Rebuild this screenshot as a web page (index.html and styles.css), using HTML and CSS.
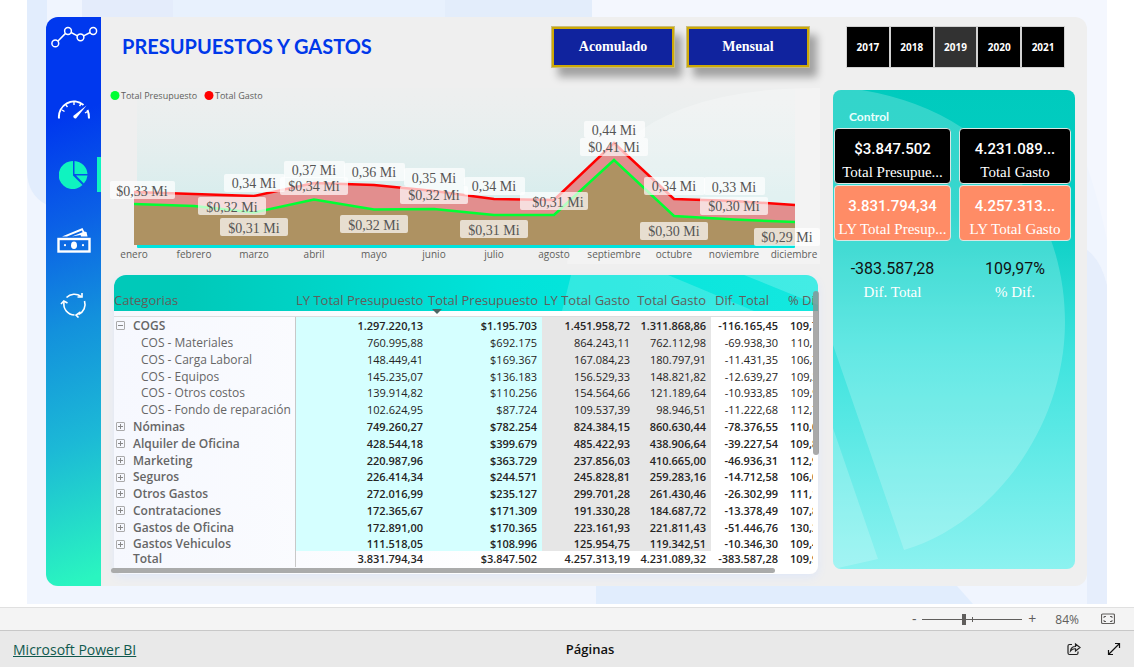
FILE: index.html
```html
<!DOCTYPE html>
<html lang="es">
<head>
<meta charset="utf-8">
<title>Presupuestos y Gastos</title>
<link rel="stylesheet" href="styles.css">
</head>
<body>
<div class="canvas">
  <svg class="canvas-art" viewBox="0 0 1080 604" preserveAspectRatio="none" aria-hidden="true">
    <path d="M55 0H146V17H55z" fill="#e4ecfb"/>
    <path d="M146 0H418V17H146z" fill="#e8f1fd"/>
    <path d="M418 0H565V17H418z" fill="#e3edfb"/>
    <path d="M565 0H1080V240Q1050 90 960 17H565z" fill="#f4f7fe"/>
    <path d="M0 0V170Q0 195 20 205V0z" fill="#e2edfd"/>
    <path d="M569 586H930L946 604H569z" fill="#e1edfd"/>
    <path d="M1060 250Q1074 260 1080 285V604H1060z" fill="#e6eefc"/>
  </svg>
  <div class="dashboard">
    <nav class="sidebar" aria-label="Secciones">
      <svg class="logo" viewBox="0 0 55 41" fill="none" stroke="#fff" stroke-width="1.5">
        <circle cx="9.300" cy="26.400" r="3.400"/><circle cx="22" cy="14" r="3.400"/><circle cx="34.500" cy="20.300" r="3.400"/><circle cx="47.200" cy="14" r="3.400"/>
        <path d="M12 24L19.500 16.400M25 15.500L31.500 18.800M37.600 18.800L44.200 15.500"/>
      </svg>
      <button class="nav-item" aria-label="Indicadores">
        <svg width="34" height="20" viewBox="0 0 34 20" fill="none" stroke="#fff">
          <path d="M2 18.500A15 15.500 0 0 1 26.500 5M30.500 10Q32 13.500 32 18.500" stroke-width="2"/>
          <path d="M5 10L7.500 11.500M9 5L10.500 7M17 2V5M24 4L22.500 6M30.500 11.500L28 13" stroke-width="1.400"/>
          <path d="M16.200 16L29.500 5.500L19 18.500Q16.500 19 16.200 16z" fill="#fff" stroke="none"/>
        </svg>
      </button>
      <button class="nav-item nav-active" aria-label="Presupuestos" aria-current="page">
        <svg width="30" height="30" viewBox="0 0 30 30" fill="#0ff3c0">
          <path d="M14 1A14 14 0 1 0 23.500 25L14 15.500z"/>
          <path d="M15.500 1A14 14 0 0 1 28.500 14H15.500z"/>
          <path d="M17 15.500H28.500A14 14 0 0 1 24.800 23.500z"/>
        </svg>
      </button>
      <button class="nav-item" aria-label="Pagos">
        <svg width="34" height="26" viewBox="0 0 34 26">
          <path d="M5 9.500L25.500 1L27.200 4.500L29.500 5L30.500 9.500H24L23.500 8L15 9.500L25.500 5.200L25 3.500L10 9.500z" fill="#fff"/>
          <rect x="1.500" y="12" width="31" height="12.500" fill="none" stroke="#fff" stroke-width="2.400"/>
          <ellipse cx="17" cy="18.200" rx="3" ry="3.800" fill="#fff"/>
          <circle cx="8" cy="18.200" r="1.100" fill="#fff"/><circle cx="26" cy="18.200" r="1.100" fill="#fff"/>
        </svg>
      </button>
      <button class="nav-item" aria-label="Actualizar">
        <svg width="28" height="26" viewBox="0 0 28 26" fill="none" stroke="#fff" stroke-width="1.600">
          <path d="M6.500 5.500A11 11 0 0 1 21 4.500M24.500 9A11 11 0 0 1 18.500 22.500M14.500 23A11 11 0 0 1 4 10"/>
          <path d="M17.500 5H22V1M20.500 20L16 23L18.500 25.500M1 12L3.800 9L7.500 11"/>
        </svg>
      </button>
    </nav>
    <main class="main">
      <header class="title-row">
        <h1 class="title">PRESUPUESTOS Y GASTOS</h1>
        <div class="views">
          <button class="view-btn">Acomulado</button>
          <button class="view-btn">Mensual</button>
        </div>
      </header>
      <div class="years">
        <button class="year">2017</button><button class="year">2018</button><button class="year year-on">2019</button><button class="year">2020</button><button class="year">2021</button>
      </div>
      <div class="left">
        <svg class="chart" viewBox="110 88 710 176" role="img" aria-label="Total Presupuesto y Total Gasto por mes">
          <defs>
            <linearGradient id="plot" x1="0" y1="0" x2="0" y2="1"><stop offset="0" stop-color="#e2efef" stop-opacity=".1"/><stop offset="1" stop-color="#c6ebeb"/></linearGradient>
          </defs>
          <rect x="137" y="88" width="658" height="157" fill="url(#plot)"/>
          <path d="M567 264Q585 88 815 88H820V264z" fill="#fff" opacity=".25"/>
          <rect x="137" y="244" width="658" height="4" rx="1" fill="#00e3de"/>
          <path d="M134 192L194 194L254 196L314 183L374 185L434 191L494 199L554 200L614 143L674 199L734 201L795 205V222L734 219.500L674 216L614 160L554 215L494 215L434 209L374 209.500L314 199.500L254 212.500L194 206L134 204z" fill="#e28e8e"/>
          <path d="M134 204L194 206L254 212.500L314 199.500L374 209.500L434 209L494 215L554 215L614 160L674 216L734 219.500L795 222V245H134z" fill="#ae9262"/>
          <path d="M134 192L194 194L254 196L314 183L374 185L434 191L494 199L554 200L614 143L674 199L734 201L795 205" fill="none" stroke="#f00" stroke-width="2.500"/>
          <path d="M134 204L194 206L254 212.500L314 199.500L374 209.500L434 209L494 215L554 215L614 160L674 216L734 219.500L795 222" fill="none" stroke="#0f3" stroke-width="2.500"/>
          <g class="plates">
            <rect x="110" y="181" width="65" height="18" rx="2"/><rect x="198" y="197" width="68" height="18" rx="2"/><rect x="220" y="218" width="68" height="18" rx="2"/><rect x="224" y="174" width="61" height="18" rx="2"/>
            <rect x="284" y="161" width="61" height="17" rx="2"/><rect x="280" y="177" width="68" height="18" rx="2"/><rect x="344" y="163" width="61" height="18" rx="2"/><rect x="340" y="215" width="68" height="18" rx="2"/>
            <rect x="404" y="168" width="61" height="18" rx="2"/><rect x="400" y="186" width="68" height="18" rx="2"/><rect x="464" y="177" width="61" height="18" rx="2"/><rect x="460" y="220" width="68" height="18" rx="2"/>
            <rect x="520" y="192" width="68" height="18" rx="2"/><rect x="584" y="121" width="61" height="17" rx="2"/><rect x="580" y="138" width="68" height="18" rx="2"/><rect x="644" y="177" width="61" height="18" rx="2"/>
            <rect x="640" y="222" width="68" height="18" rx="2"/><rect x="704" y="177" width="61" height="18" rx="2"/><rect x="700" y="197" width="68" height="18" rx="2"/><rect x="754" y="228" width="66" height="18" rx="2"/>
          </g>
          <g class="labels">
            <text x="142" y="196">$0,33 Mi</text><text x="232" y="212">$0,32 Mi</text><text x="254" y="233">$0,31 Mi</text><text x="254" y="188">0,34 Mi</text>
            <text x="314" y="175">0,37 Mi</text><text x="314" y="191">$0,34 Mi</text><text x="374" y="177">0,36 Mi</text><text x="374" y="230">$0,32 Mi</text>
            <text x="434" y="183">0,35 Mi</text><text x="434" y="200">$0,32 Mi</text><text x="494" y="191">0,34 Mi</text><text x="494" y="235">$0,31 Mi</text>
            <text x="558" y="207">$0,31 Mi</text><text x="614" y="135">0,44 Mi</text><text x="614" y="152">$0,41 Mi</text><text x="674" y="191">0,34 Mi</text>
            <text x="674" y="236">$0,30 Mi</text><text x="734" y="192">0,33 Mi</text><text x="734" y="211">$0,30 Mi</text><text x="787" y="242">$0,29 Mi</text>
          </g>
          <g class="months">
            <text x="134" y="258">enero</text><text x="194" y="258">febrero</text><text x="254" y="258">marzo</text><text x="314" y="258">abril</text><text x="374" y="258">mayo</text><text x="434" y="258">junio</text><text x="494" y="258">julio</text><text x="554" y="258">agosto</text><text x="614" y="258">septiembre</text><text x="674" y="258">octubre</text><text x="734" y="258">noviembre</text><text x="794" y="258">diciembre</text>
          </g>
          <circle cx="115" cy="95.500" r="4.500" fill="#0f3"/><circle cx="209" cy="95.500" r="4.500" fill="#f00"/>
          <g class="legend"><text x="121" y="99">Total Presupuesto</text><text x="215" y="99">Total Gasto</text></g>
        </svg>
        <section class="matrix">
          <svg class="band" viewBox="0 0 704 36" preserveAspectRatio="none" aria-hidden="true">
            <path d="M457 0H554L640 36H448z" fill="#fff" opacity=".18"/><path d="M630 0H704V30z" fill="#fff" opacity=".2"/>
          </svg>
          <div class="scroll">
          <table class="grid">
            <colgroup><col class="c-cat"><col class="c-lyp"><col class="c-tp"><col class="c-lyg"><col class="c-tg"><col class="c-dif"><col class="c-pct"></colgroup>
            <thead><tr><th scope="col">Categorias</th><th scope="col">LY Total Presupuesto</th><th scope="col" class="sorted" aria-sort="descending">Total Presupuesto</th><th scope="col">LY Total Gasto</th><th scope="col">Total Gasto</th><th scope="col">Dif. Total</th><th scope="col">% Dif.</th></tr></thead>
            <tbody>
              <tr class="group"><th scope="row"><button class="toggle open" aria-label="Contraer"></button>COGS</th><td>1.297.220,13</td><td>$1.195.703</td><td>1.451.958,72</td><td>1.311.868,86</td><td>-116.165,45</td><td>109,72%</td></tr>
              <tr><th scope="row">COS - Materiales</th><td>760.995,88</td><td>$692.175</td><td>864.243,11</td><td>762.112,98</td><td>-69.938,30</td><td>110,10%</td></tr>
              <tr><th scope="row">COS - Carga Laboral</th><td>148.449,41</td><td>$169.367</td><td>167.084,23</td><td>180.797,91</td><td>-11.431,35</td><td>106,75%</td></tr>
              <tr><th scope="row">COS - Equipos</th><td>145.235,07</td><td>$136.183</td><td>156.529,33</td><td>148.821,82</td><td>-12.639,27</td><td>109,28%</td></tr>
              <tr><th scope="row">COS - Otros costos</th><td>139.914,82</td><td>$110.256</td><td>154.564,66</td><td>121.189,64</td><td>-10.933,85</td><td>109,92%</td></tr>
              <tr><th scope="row">COS - Fondo de reparación</th><td>102.624,95</td><td>$87.724</td><td>109.537,39</td><td>98.946,51</td><td>-11.222,68</td><td>112,79%</td></tr>
              <tr class="group"><th scope="row"><button class="toggle" aria-label="Expandir"></button>Nóminas</th><td>749.260,27</td><td>$782.254</td><td>824.384,15</td><td>860.630,44</td><td>-78.376,55</td><td>110,02%</td></tr>
              <tr class="group"><th scope="row"><button class="toggle" aria-label="Expandir"></button>Alquiler de Oficina</th><td>428.544,18</td><td>$399.679</td><td>485.422,93</td><td>438.906,64</td><td>-39.227,54</td><td>109,81%</td></tr>
              <tr class="group"><th scope="row"><button class="toggle" aria-label="Expandir"></button>Marketing</th><td>220.987,96</td><td>$363.729</td><td>237.856,03</td><td>410.665,00</td><td>-46.936,31</td><td>112,90%</td></tr>
              <tr class="group"><th scope="row"><button class="toggle" aria-label="Expandir"></button>Seguros</th><td>226.414,34</td><td>$244.571</td><td>245.828,81</td><td>259.283,16</td><td>-14.712,58</td><td>106,02%</td></tr>
              <tr class="group"><th scope="row"><button class="toggle" aria-label="Expandir"></button>Otros Gastos</th><td>272.016,99</td><td>$235.127</td><td>299.701,28</td><td>261.430,46</td><td>-26.302,99</td><td>111,19%</td></tr>
              <tr class="group"><th scope="row"><button class="toggle" aria-label="Expandir"></button>Contrataciones</th><td>172.365,67</td><td>$171.309</td><td>191.330,28</td><td>184.687,72</td><td>-13.378,49</td><td>107,81%</td></tr>
              <tr class="group"><th scope="row"><button class="toggle" aria-label="Expandir"></button>Gastos de Oficina</th><td>172.891,00</td><td>$170.365</td><td>223.161,93</td><td>221.811,43</td><td>-51.446,76</td><td>130,20%</td></tr>
              <tr class="group"><th scope="row"><button class="toggle" aria-label="Expandir"></button>Gastos Vehiculos</th><td>111.518,05</td><td>$108.996</td><td>125.954,75</td><td>119.342,51</td><td>-10.346,30</td><td>109,49%</td></tr>
            </tbody>
            <tfoot><tr class="group"><th scope="row">Total</th><td>3.831.794,34</td><td>$3.847.502</td><td>4.257.313,19</td><td>4.231.089,32</td><td>-383.587,28</td><td>109,97%</td></tr></tfoot>
          </table>
          </div>
          <div class="bar-x"></div><div class="bar-y"></div>
        </section>
      </div>
      <aside class="control">
        <svg class="control-art" viewBox="833 90 242 479" preserveAspectRatio="none" aria-hidden="true">
          <path d="M833 90H862Q920 100 961 127C1025 165 1065 240 1065 322C1065 430 990 525 904 550L833 345z" fill="#fff" opacity=".2"/>
          <path d="M833 428L878 559L838 568L833 566z" fill="#fff" opacity=".2"/>
        </svg>
        <h2 class="control-title">Control</h2>
        <div class="cards">
          <div class="card black"><strong>$3.847.502</strong><span>Total Presupue...</span></div>
          <div class="card black"><strong>4.231.089...</strong><span>Total Gasto</span></div>
          <div class="card coral"><strong>3.831.794,34</strong><span>LY Total Presup...</span></div>
          <div class="card coral"><strong>4.257.313...</strong><span>LY Total Gasto</span></div>
          <div class="card plain"><strong>-383.587,28</strong><span>Dif. Total</span></div>
          <div class="card plain"><strong>109,97%</strong><span>% Dif.</span></div>
        </div>
      </aside>
    </main>
  </div>
</div>
<div class="zoom-bar">
  <button class="zoom-btn" aria-label="Alejar">-</button>
  <input class="zoom-range" type="range" min="10" max="190" value="84" aria-label="Zoom">
  <button class="zoom-btn" aria-label="Acercar">+</button>
  <span class="zoom-value">84%</span>
  <button class="fit" aria-label="Ajustar a la página">
    <svg width="14" height="12" viewBox="0 0 14 12" fill="none" stroke="#605e5c"><rect x=".5" y="1" width="13" height="9.500" rx="1.200" stroke-width="1.200"/><path d="M3 5V3.500H5M9 3.500H11V5M11 7V8.500H9M5 8.500H3V7"/></svg>
  </button>
</div>
<footer class="footer">
  <a class="brand" href="#">Microsoft Power BI</a>
  <span class="pages">Páginas</span>
  <div class="tools">
    <button class="tool" aria-label="Compartir"><svg width="14" height="14" viewBox="0 0 14 14" fill="none" stroke="#222" stroke-width="1.200"><path d="M5 2.500H2.500Q1 2.500 1 4V11Q1 12.500 2.500 12.500H9.500Q11 12.500 11 11V9.500"/><path d="M3.500 9Q4 4.500 8.500 4.500V2L13 5.500L8.500 9V6.800Q5.500 6.500 3.500 9z"/></svg></button>
    <button class="tool" aria-label="Pantalla completa"><svg width="14" height="14" viewBox="0 0 14 14" fill="none" stroke="#111" stroke-width="1.200"><path d="M1.500 12.500L12.500 1.500M8 1.500H12.500V6M1.500 8V12.500H6"/></svg></button>
  </div>
</footer>
</body>
</html>
```
FILE: styles.css
```css
* { box-sizing: border-box; }
body { margin: 0; min-height: 100vh; display: flex; flex-direction: column; background: #fff; color: #605e5c; font-family: "Open Sans", "Noto Sans", sans-serif; }
button { margin: 0; padding: 0; border: 0; background: none; font: inherit; color: inherit; cursor: pointer; }
svg { display: block; }

.canvas { position: relative; flex: 1; margin: 0 27px 3px; padding: 17px 20px 18px 19px; background: #f0f5fe; }
.canvas-art { position: absolute; inset: 0; width: 100%; height: 100%; }
.dashboard { position: relative; display: flex; height: 100%; border-radius: 12px; overflow: hidden; background: #efefef; }

.sidebar { flex: 0 0 55px; display: flex; flex-direction: column; background: linear-gradient(160deg, #0038ee 0, #0038ee 18%, #0b60e6 36%, #1391dc 54%, #1cb9d6 74%, #2af5c0 98%); }
.logo { width: 55px; height: 41px; margin-bottom: 19px; }
.nav-item { height: 65px; display: flex; align-items: center; justify-content: center; position: relative; }
.nav-active::after { content: ""; position: absolute; right: 0; top: 15px; width: 4px; height: 35px; background: #0ff3c0; }

.main { flex: 1; min-width: 0; display: grid; grid-template-columns: minmax(0, 1fr) 242px; grid-template-rows: 71px auto; column-gap: 13px; padding: 0 12px 12px 9px; }
.title-row { display: flex; justify-content: space-between; align-items: flex-start; padding: 9px 10px 0 12px; }
.title { margin: 0; font: 700 20px/40px Lato, "Open Sans", sans-serif; color: #0038ea; white-space: nowrap; }
.views { display: flex; gap: 11px; }
.view-btn { width: 124px; height: 42px; border: 3px solid #cda908; outline: 1px solid #c9bd7c; outline-offset: -1px; background: #10239e; box-shadow: 7px 9px 8px rgba(0, 0, 0, .33); color: #fff; font: 700 14px "Liberation Serif", serif; }
.years { display: grid; grid-template-columns: repeat(5, 1fr); gap: 2px; height: 50px; padding: 10px 11px 0 14px; }
.year { background: #000; color: #fff; font-size: 10px; font-weight: 700; box-shadow: 0 0 0 1px #d2d2d2; }
.year-on { background: #323232; }

.left { display: flex; flex-direction: column; min-width: 0; }
.chart { width: 100%; height: auto; }
.plates { fill: #fff; fill-opacity: .7; }
.labels { font: 14px "Liberation Serif", serif; fill: #555; text-anchor: middle; }
.months { font-size: 10px; fill: #605e5c; text-anchor: middle; }
.legend { font-size: 9px; fill: #605e5c; }

.matrix { position: relative; margin: 11px 2px 0 4px; padding-bottom: 7px; border-radius: 12px 12px 8px 8px; background: linear-gradient(90deg, #00c9b9 10%, #00e3da 55%, #14e8df) top / 100% 36px no-repeat, linear-gradient(90deg, #f6f8fe, #fff 60%); box-shadow: 0 3px 10px #dfe7f8; }
.band { position: absolute; top: 0; left: 0; width: 100%; height: 36px; border-radius: 12px 12px 0 0; }
.scroll { position: relative; overflow: hidden; margin-right: 5px; }
.grid { width: 725px; min-width: 100%; table-layout: fixed; border-collapse: separate; border-spacing: 0; font-size: 11px; color: #252423; }
.c-cat { width: 182px; } .c-lyp { width: 132px; } .c-tp { width: 114px; } .c-lyg { width: 93px; } .c-tg { width: 76px; } .c-dif { width: 72px; } .c-pct { width: 56px; }
.grid th, .grid td { padding: 0 5px 0 0; line-height: 17px; text-align: right; white-space: nowrap; }
.grid th:first-child { text-align: left; }
.grid thead th { position: relative; height: 42px; padding-top: 10px; border-bottom: 1px solid #ddd; font-size: 13px; font-weight: 400; color: #605e5c; }
.grid thead th:nth-child(6) { padding-right: 14px; }
.grid thead th:last-child { text-align: left; padding-left: 5px; }
.sorted::after { content: ""; position: absolute; left: 4px; bottom: 2px; border: 5px solid transparent; border-top-color: #4c6664; border-bottom: 0; }
.grid tbody th, .grid tfoot th { border-right: 1px solid #c8c8c8; padding-left: 27px; font-size: 12px; font-weight: 400; color: #666; }
.grid tbody .group th, .grid tfoot .group th { padding-left: 19px; font-weight: 600; }
.grid tbody tr:nth-child(5n) > * { line-height: 16px; }
.grid tbody tr:last-child > * { line-height: 15px; }
.grid tfoot tr > * { line-height: 16px; }
.grid .group td { padding-right: 5px; font-weight: 600; }
.grid tbody td:nth-child(2), .grid tbody td:nth-child(3) { background: #d5ffff; }
.grid tbody td:nth-child(4), .grid tbody td:nth-child(5) { background: #e6e6e6; }
.toggle { position: relative; float: left; width: 9px; height: 9px; margin: 4px 0 0 -17px; border: 1px solid #aaa; border-radius: 1px; background: linear-gradient(#888, #888) center / 5px 1px no-repeat, linear-gradient(#888, #888) center / 1px 5px no-repeat; }
.toggle.open { background: linear-gradient(#888, #888) center / 5px 1px no-repeat; }
.bar-x { position: absolute; left: -3px; right: 43px; bottom: 1px; height: 5px; border-radius: 3px; background: #aaabab; }
.bar-y { position: absolute; right: -1px; top: 16px; width: 6px; height: 164px; border-radius: 3px; background: rgba(140, 140, 140, .75); }

.control { position: relative; margin: 2px 0 5px; padding: 18px 4px 0 1px; border-radius: 8px; overflow: hidden; background: linear-gradient(#00cbbe 0, #05cdc2 25%, #3ee3de 55%, #8cf2f0); }
.control-art { position: absolute; inset: 0; width: 100%; height: 100%; }
.control-title { position: relative; margin: 0 0 2px 15px; font: 700 12px/18px Lato, sans-serif; color: #e9fffc; }
.cards { position: relative; display: grid; grid-template-columns: 117fr 112fr; gap: 1px 8px; }
.card { display: flex; flex-direction: column; align-items: center; justify-content: flex-end; height: 56px; overflow: hidden; white-space: nowrap; border: 1px solid #d9e6e4; border-radius: 4px; color: #fff; }
.card strong { font: 500 15px/24px Roboto, sans-serif; }
.card span { font: 15px/22px "Liberation Serif", serif; }
.black { background: #000; }
.coral { background: #ff8c66; }
.plain { border-color: transparent; height: 62px; }
.plain strong { color: #111; font-size: 16px; font-weight: 400; }

.zoom-bar { display: flex; align-items: center; justify-content: flex-end; height: 24px; padding-right: 19px; background: #f4f4f4; border-top: 1px solid #e0e0e0; border-bottom: 1px solid #c8c8c8; font-size: 12px; }
.zoom-btn { width: 8px; font-size: 14px; line-height: 20px; }
.zoom-range { appearance: none; width: 100px; height: 12px; margin: 0 6px 0 4px; background: linear-gradient(#605e5c, #605e5c) 50px center / 1px 5px no-repeat, linear-gradient(#605e5c, #605e5c) center / 100% 1px no-repeat; }
.zoom-range::-webkit-slider-thumb { appearance: none; width: 4px; height: 11px; background: #605e5c; }
.zoom-value { margin: 0 22px 0 19px; }
.footer { display: grid; grid-template-columns: 12fr auto 11fr; align-items: center; height: 36px; padding: 0 13px; background: #e9e9e9; font-size: 13px; }
.brand { color: #10594e; font-size: 14px; }
.pages { color: #111; font-weight: 600; }
.tools { display: flex; justify-content: flex-end; gap: 26px; }
```
